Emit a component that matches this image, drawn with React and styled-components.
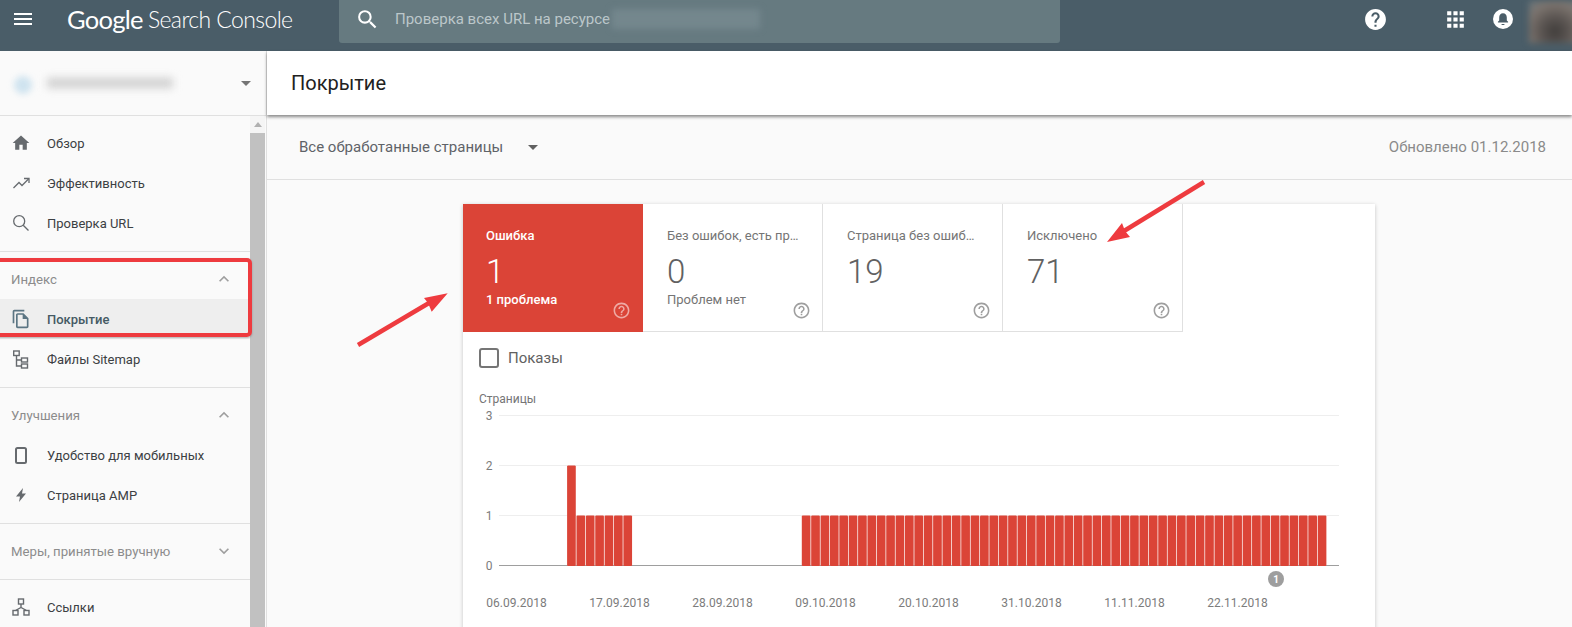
import styled, { createGlobalStyle } from 'styled-components';
import {
  MdApps,
  MdArrowDropDown,
  MdHelp,
  MdHelpOutline,
  MdHome,
  MdKeyboardArrowDown,
  MdKeyboardArrowUp,
  MdMenu,
  MdOutlineFileCopy,
  MdSearch,
} from 'react-icons/md';

const FONT = 'Roboto, "Noto Sans", sans-serif';
const RED = '#db4437';

const GlobalStyle = createGlobalStyle`
  html, body {
    margin: 0;
    height: 100%;
    overflow: hidden;
    background: #fafafa;
    font-family: ${FONT};
  }
  * {
    box-sizing: border-box;
  }
`;

const Page = styled.div`
  position: relative;
  width: 1572px;
  height: 627px;
  overflow: hidden;
  display: flex;
  flex-direction: column;
`;

/* top bar */
const Header = styled.header`
  height: 51px;
  flex: none;
  display: flex;
  align-items: flex-start;
  background: #4a5d68;
  color: #fff;
`;

const MenuButton = styled.div`
  width: 46px;
  height: 38px;
  flex: none;
  display: flex;
  align-items: center;
  justify-content: center;
  font-size: 24px;
`;

const Logo = styled.div`
  width: 292px;
  height: 38px;
  flex: none;
  padding-left: 21px;
  display: flex;
  align-items: center;
  gap: 5px;
  font-family: Lato, "Open Sans", sans-serif;
  font-size: 25.5px;
  letter-spacing: -0.7px;
  white-space: nowrap;
`;

const LogoLight = styled.span`
  font-size: 23px;
  font-weight: 300;
  letter-spacing: -0.6px;
`;

const SearchBox = styled.div`
  width: 721px;
  height: 43px;
  flex: none;
  margin-left: 1px;
  padding: 0 0 5px 16px;
  display: flex;
  align-items: center;
  background: #667a80;
  border-radius: 0 0 3px 3px;
`;

const SearchIcon = styled.div`
  display: flex;
  width: 40px;
  font-size: 25px;
`;

const Placeholder = styled.span`
  font-size: 15px;
  color: #bcc7ca;
`;

const BlurredUrl = styled.span`
  width: 148px;
  height: 20px;
  margin-left: 2px;
  background: #74878d;
  filter: blur(3px);
`;

const HeaderIcons = styled.div`
  flex: 1;
  display: flex;
  align-items: flex-start;
`;

const HeaderIcon = styled.div`
  position: relative;
  height: 38px;
  width: ${(p) => p.$width}px;
  margin-left: ${(p) => p.$gap}px;
  display: flex;
  align-items: center;
  justify-content: center;
  font-size: ${(p) => p.$size}px;
`;

const Avatar = styled.div`
  width: 52px;
  height: 42px;
  margin: 1px 0 0 16px;
  background: radial-gradient(circle at 50% 72%, #403d3b 0, #5b5552 35%, #7d756f 70%, #66757c 100%);
  filter: blur(3px);
`;

/* page body */
const Body = styled.div`
  flex: 1;
  display: flex;
  min-height: 0;
`;

const Sidebar = styled.aside`
  width: 267px;
  flex: none;
  display: flex;
  flex-direction: column;
  background: #fafafa;
  border-right: 1px solid #e0e0e0;
`;

const PropertyPicker = styled.div`
  height: 65px;
  flex: none;
  padding: 0 8px 0 14px;
  display: flex;
  align-items: center;
  border-bottom: 1px solid #e0e0e0;
`;

const PropertyDot = styled.span`
  width: 18px;
  height: 18px;
  margin-top: 3px;
  border-radius: 50%;
  background: #cfe3ef;
  filter: blur(3px);
`;

const PropertyName = styled.span`
  width: 126px;
  height: 10px;
  margin-left: 15px;
  background: #cfcfcf;
  filter: blur(4px);
`;

const PickerArrow = styled.span`
  margin-left: auto;
  display: flex;
  font-size: 24px;
  color: #757575;
`;

const SidebarBody = styled.div`
  flex: 1;
  display: flex;
  min-height: 0;
`;

const Nav = styled.nav`
  width: 250px;
  flex: none;
  overflow: hidden;
`;

const NavSection = styled.div`
  padding: 7px 0 8px;
  border-bottom: 1px solid #e0e0e0;
  &:last-child {
    border-bottom: 0;
  }
`;

const NavHeader = styled.div`
  height: 40px;
  padding: 0 16px 0 11px;
  display: flex;
  align-items: center;
  justify-content: space-between;
  font-size: 13.2px;
  color: #8c8c8c;
`;

const Chevron = styled.span`
  display: flex;
  font-size: 20px;
  color: #9e9e9e;
`;

const NavRow = styled.div`
  height: 40px;
  padding-left: 11px;
  display: flex;
  align-items: center;
  font-size: 13px;
  color: ${(p) => (p.$active ? '#455a64' : '#3c4043')};
  font-weight: ${(p) => (p.$active ? 500 : 400)};
  background: ${(p) => (p.$active ? '#eeeeee' : 'transparent')};
`;

const NavIcon = styled.span`
  width: 36px;
  flex: none;
  display: flex;
  font-size: 20px;
  color: ${(p) => (p.$active ? '#5b7583' : '#666a6e')};
`;

const ScrollBar = styled.div`
  width: 15px;
  flex: none;
  display: flex;
  flex-direction: column;
  background: #f5f5f5;
`;

const ScrollUp = styled.div`
  height: 17px;
  flex: none;
  display: flex;
  align-items: center;
  justify-content: center;
  &::before {
    content: '';
    border: 4px solid transparent;
    border-top: 0;
    border-bottom: 5px solid #b0b0b0;
  }
`;

const ScrollThumb = styled.div`
  flex: 1;
  background: #c1c1c1;
`;

const Main = styled.main`
  flex: 1;
  min-width: 0;
  display: flex;
  flex-direction: column;
  background: #fafafa;
`;

const TitleBar = styled.div`
  height: 64px;
  flex: none;
  position: relative;
  padding-left: 24px;
  display: flex;
  align-items: center;
  background: #fff;
  font-size: 20px;
  font-weight: 400;
  color: #212121;
  box-shadow: 0 2px 3px rgba(0, 0, 0, 0.45);
`;

const FilterBar = styled.div`
  height: 65px;
  flex: none;
  padding: 0 26px 0 32px;
  display: flex;
  align-items: center;
  border-bottom: 1px solid #e0e0e0;
  font-size: 15px;
`;

const FilterLabel = styled.span`
  color: #5f6368;
`;

const FilterArrow = styled.span`
  display: flex;
  margin-left: 18px;
  font-size: 24px;
  color: #616161;
`;

const Updated = styled.span`
  margin-left: auto;
  color: #8a8a8a;
`;

const Content = styled.div`
  flex: 1;
  min-height: 0;
  padding-top: 24px;
  display: flex;
  justify-content: center;
`;

const Card = styled.section`
  width: 912px;
  height: 470px;
  margin-right: 1px;
  flex: none;
  background: #fff;
  box-shadow: 0 1px 4px rgba(0, 0, 0, 0.22);
`;

const Tabs = styled.div`
  display: flex;
`;

const Tab = styled.div`
  position: relative;
  width: 180px;
  height: 128px;
  padding: 24px 22px 0 ${(p) => (p.$active ? 23 : 24)}px;
  background: ${(p) => (p.$active ? RED : '#fff')};
  color: ${(p) => (p.$active ? '#fff' : '#757575')};
  border-right: 1px solid ${(p) => (p.$active ? RED : '#e0e0e0')};
  border-bottom: 1px solid ${(p) => (p.$active ? RED : '#e0e0e0')};
`;

const TabLabel = styled.div`
  font-size: 13px;
  line-height: 16px;
  font-weight: ${(p) => (p.$active ? 500 : 400)};
  white-space: nowrap;
  overflow: hidden;
  text-overflow: ellipsis;
`;

const TabValue = styled.div`
  margin-top: 8px;
  font-size: 33px;
  line-height: 40px;
  font-weight: 300;
  color: ${(p) => (p.$active ? '#fff' : '#616161')};
`;

const TabNote = styled.div`
  font-size: 13px;
  line-height: 16px;
  font-weight: ${(p) => (p.$active ? 500 : 400)};
`;

const TabHelp = styled.span`
  position: absolute;
  right: 11px;
  bottom: 11px;
  display: flex;
  font-size: 19px;
  color: ${(p) => (p.$active ? 'rgba(255, 255, 255, 0.55)' : '#9e9e9e')};
`;

const CheckRow = styled.div`
  height: 52px;
  padding-left: 16px;
  display: flex;
  align-items: center;
  gap: 9px;
  font-size: 15px;
  color: #616161;
`;

const CheckBox = styled.span`
  width: 20px;
  height: 20px;
  border: 2px solid #757575;
  border-radius: 3px;
`;

const ChartTitle = styled.div`
  margin: 7px 0 0 16px;
  font-size: 12px;
  line-height: 16px;
  color: #757575;
`;

const ChartPlot = styled.div`
  position: relative;
  margin-left: 16px;
  display: flex;
`;

const YAxis = styled.div`
  width: 20px;
  flex: none;
  padding-top: 1px;
  display: flex;
  flex-direction: column;
  gap: 34px;
  font-size: 12px;
  line-height: 16px;
  text-align: center;
  color: #7c7c7c;
`;

const Badge = styled.span`
  position: absolute;
  left: 789px;
  top: 164px;
  width: 16px;
  height: 16px;
  border-radius: 50%;
  display: flex;
  align-items: center;
  justify-content: center;
  background: #9e9e9e;
  color: #fff;
  font-size: 10px;
  font-weight: 700;
`;

const XAxis = styled.div`
  margin-top: 21px;
  padding-left: 2px;
  display: flex;
  font-size: 12px;
  line-height: 16px;
  color: #7c7c7c;
`;

const XLabel = styled.span`
  width: 103px;
  flex: none;
  text-align: center;
`;

/* annotations drawn on top of the screenshot */
const Highlight = styled.div`
  position: absolute;
  left: -6px;
  top: 258px;
  width: 258px;
  height: 79px;
  border: 4px solid #ee3b3f;
  border-radius: 5px;
  box-shadow: 0 1px 2px rgba(0, 0, 0, 0.25);
`;

const Arrows = styled.svg`
  position: absolute;
  left: 0;
  top: 0;
  pointer-events: none;
`;

const TrendIcon = () => (
  <svg width="20" height="20" viewBox="0 0 20 20" fill="none" stroke="currentColor" strokeWidth="1.3">
    <path d="M2.5 15L8 9.5L11 12.5L17.5 6" />
    <path d="M13 5.5H18V10" />
  </svg>
);

const ThinSearchIcon = () => (
  <svg width="20" height="20" viewBox="0 0 20 20" fill="none" stroke="currentColor" strokeWidth="1.3">
    <circle cx="8.2" cy="8.2" r="5.5" />
    <path d="M12.2 12.2L17.5 17.5" />
  </svg>
);

const PhoneIcon = () => (
  <svg width="20" height="20" viewBox="0 0 20 20" fill="none" stroke="currentColor" strokeWidth="2">
    <rect x="5" y="3" width="10" height="15" rx="1.5" />
  </svg>
);

const BoltIcon = () => (
  <svg width="20" height="20" viewBox="0 0 20 20" fill="currentColor">
    <path d="M12 3L5 11.5H9L8 17L15 8.5H11Z" />
  </svg>
);

const SitemapIcon = () => (
  <svg width="20" height="20" viewBox="0 0 20 20" fill="none" stroke="currentColor" strokeWidth="1.4">
    <rect x="2.7" y="2" width="5.5" height="4.5" />
    <rect x="10.5" y="9" width="6" height="4" />
    <rect x="10.5" y="15" width="6" height="4" />
    <path d="M5.5 6.5V17H10.5M5.5 11H10.5" />
  </svg>
);

const LinksIcon = () => (
  <svg width="20" height="20" viewBox="0 0 20 20" fill="none" stroke="currentColor" strokeWidth="1.4">
    <rect x="7.5" y="2" width="5" height="5" />
    <rect x="2" y="13.5" width="5" height="4.5" />
    <rect x="13" y="13.5" width="5" height="4.5" />
    <path d="M10 7V10.5M4.5 13.5L10 10.5L15.5 13.5" />
  </svg>
);

const BellIcon = () => (
  <svg width="20" height="20" viewBox="0 0 20 20">
    <circle cx="10" cy="10" r="10" fill="#fff" />
    <path
      d="M10 4.2c-2.4 0-3.8 1.9-3.8 4.2v3l-1.3 1.4v.6h10.2v-.6l-1.3-1.4v-3c0-2.3-1.4-4.2-3.8-4.2zM8.6 15.1h2.8v.9H8.6z"
      fill="#4a5d68"
    />
  </svg>
);

const NAV = [
  {
    items: [
      { icon: <MdHome />, label: 'Обзор' },
      { icon: <TrendIcon />, label: 'Эффективность' },
      { icon: <ThinSearchIcon />, label: 'Проверка URL' },
    ],
  },
  {
    title: 'Индекс',
    open: true,
    items: [
      { icon: <MdOutlineFileCopy />, label: 'Покрытие', active: true },
      { icon: <SitemapIcon />, label: 'Файлы Sitemap' },
    ],
  },
  {
    title: 'Улучшения',
    open: true,
    items: [
      { icon: <PhoneIcon />, label: 'Удобство для мобильных' },
      { icon: <BoltIcon />, label: 'Страница AMP' },
    ],
  },
  { title: 'Меры, принятые вручную', items: [] },
  { items: [{ icon: <LinksIcon />, label: 'Ссылки' }] },
];

const TABS = [
  { label: 'Ошибка', value: '1', note: '1 проблема', active: true },
  { label: 'Без ошибок, есть предупреждения', value: '0', note: 'Проблем нет' },
  { label: 'Страница без ошибок', value: '19' },
  { label: 'Исключено', value: '71' },
];

const DATES = ['06.09.2018', '17.09.2018', '28.09.2018', '09.10.2018', '20.10.2018', '31.10.2018', '11.11.2018', '22.11.2018'];

const BAR_STEP = 9.38;
const AXIS_LEFT = 499;
const ROW_HEIGHT = 50;
const ZERO_Y = 158.5;

const bars = [
  ...Array.from({ length: 7 }, (_, i) => ({ x: 567.1 + i * BAR_STEP, value: i === 0 ? 2 : 1 })),
  ...Array.from({ length: 56 }, (_, i) => ({ x: 801.8 + i * BAR_STEP, value: 1 })),
];

const Chart = () => (
  <svg width="840" height="167" viewBox="0 0 840 167">
    {[8.5, 58.5, 108.5].map((y) => (
      <line key={y} x1="0" x2="840" y1={y} y2={y} stroke="#eeeeee" />
    ))}
    <line x1="0" x2="840" y1={ZERO_Y} y2={ZERO_Y} stroke="#9e9e9e" />
    {bars.map(({ x, value }) => (
      <rect
        key={x}
        x={x - AXIS_LEFT}
        y={ZERO_Y - value * ROW_HEIGHT}
        width={BAR_STEP - 0.7}
        height={value * ROW_HEIGHT + 0.5}
        rx="1"
        fill={RED}
      />
    ))}
  </svg>
);

export default function App() {
  return (
    <Page>
      <GlobalStyle />
      <Header>
        <MenuButton>
          <MdMenu />
        </MenuButton>
        <Logo>
          <span>Google</span>
          <LogoLight>Search Console</LogoLight>
        </Logo>
        <SearchBox>
          <SearchIcon>
            <MdSearch />
          </SearchIcon>
          <Placeholder>Проверка всех URL на ресурсе</Placeholder>
          <BlurredUrl />
        </SearchBox>
        <HeaderIcons>
          <HeaderIcon $width={26} $gap={302} $size={25}>
            <MdHelp />
          </HeaderIcon>
          <HeaderIcon $width={26} $gap={54} $size={25}>
            <MdApps />
          </HeaderIcon>
          <HeaderIcon $width={20} $gap={25} $size={20}>
            <BellIcon />
          </HeaderIcon>
          <Avatar />
        </HeaderIcons>
      </Header>
      <Body>
        <Sidebar>
          <PropertyPicker>
            <PropertyDot />
            <PropertyName />
            <PickerArrow>
              <MdArrowDropDown />
            </PickerArrow>
          </PropertyPicker>
          <SidebarBody>
            <Nav>
              {NAV.map((section, i) => (
                <NavSection key={i}>
                  {section.title && (
                    <NavHeader>
                      {section.title}
                      <Chevron>{section.open ? <MdKeyboardArrowUp /> : <MdKeyboardArrowDown />}</Chevron>
                    </NavHeader>
                  )}
                  {section.items.map((item) => (
                    <NavRow key={item.label} $active={item.active}>
                      <NavIcon $active={item.active}>{item.icon}</NavIcon>
                      {item.label}
                    </NavRow>
                  ))}
                </NavSection>
              ))}
            </Nav>
            <ScrollBar>
              <ScrollUp />
              <ScrollThumb />
            </ScrollBar>
          </SidebarBody>
        </Sidebar>
        <Main>
          <TitleBar>Покрытие</TitleBar>
          <FilterBar>
            <FilterLabel>Все обработанные страницы</FilterLabel>
            <FilterArrow>
              <MdArrowDropDown />
            </FilterArrow>
            <Updated>Обновлено 01.12.2018</Updated>
          </FilterBar>
          <Content>
            <Card>
              <Tabs>
                {TABS.map((tab) => (
                  <Tab key={tab.label} $active={tab.active}>
                    <TabLabel $active={tab.active}>{tab.label}</TabLabel>
                    <TabValue $active={tab.active}>{tab.value}</TabValue>
                    {tab.note && <TabNote $active={tab.active}>{tab.note}</TabNote>}
                    <TabHelp $active={tab.active}>
                      <MdHelpOutline />
                    </TabHelp>
                  </Tab>
                ))}
              </Tabs>
              <CheckRow>
                <CheckBox />
                Показы
              </CheckRow>
              <ChartTitle>Страницы</ChartTitle>
              <ChartPlot>
                <YAxis>
                  {[3, 2, 1, 0].map((n) => (
                    <span key={n}>{n}</span>
                  ))}
                </YAxis>
                <Chart />
                <Badge>1</Badge>
              </ChartPlot>
              <XAxis>
                {DATES.map((date) => (
                  <XLabel key={date}>{date}</XLabel>
                ))}
              </XAxis>
            </Card>
          </Content>
        </Main>
      </Body>
      <Highlight />
      <Arrows width="1572" height="627" viewBox="0 0 1572 627">
        <path d="M358 345L429 303" stroke="#ee3b3f" strokeWidth="4.5" />
        <path d="M447.7 293.3L424 298L428 303L431.7 311.7Z" fill="#ee3b3f" />
        <path d="M1204 182L1124 231" stroke="#ee3b3f" strokeWidth="4.5" />
        <path d="M1107 242L1122 223L1125 231L1130 237Z" fill="#ee3b3f" />
      </Arrows>
    </Page>
  );
}
